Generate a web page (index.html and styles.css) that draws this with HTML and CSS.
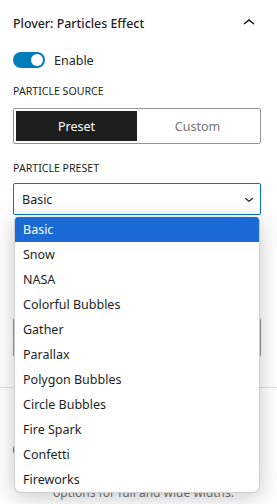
FILE: index.html
```html
<!DOCTYPE html>
<html lang="en">
<head>
  <meta charset="UTF-8">
  <meta name="viewport" content="width=device-width, initial-scale=1.0">
  <title>Plover: Particles Effect</title>
  <link rel="stylesheet" href="styles.css">
</head>
<body>
  <div class="panel">
    <div class="panel-header">
      <span class="panel-title">Plover: Particles Effect</span>
      <svg class="icon-up" width="24" height="24" viewBox="0 0 24 24"><path d="M6.5 12.4L12 8l5.5 4.4-.9 1.2L12 10l-4.6 3.6-1-1.2z"/></svg>
    </div>
    <div class="panel-body">
      <div class="toggle-row">
        <span class="toggle on"><span class="knob"></span></span>
        <span class="toggle-label">Enable</span>
      </div>

      <div class="field-label">Particle Source</div>
      <div class="segmented">
        <span class="seg active">Preset</span>
        <span class="seg">Custom</span>
      </div>

      <div class="field-label second">Particle Preset</div>
      <div class="select-box">
        <span>Basic</span>
        <svg width="18" height="18" viewBox="0 0 24 24"><path d="M17.5 11.6L12 16l-5.5-4.4.9-1.2L12 14l4.6-3.6 1 1.2z"/></svg>
      </div>
      <div class="hidden-box"></div>
    </div>

    <div class="panel next">
      <div class="toggle-row lower">
        <span class="toggle on"><span class="knob"></span></span>
      </div>
      <p class="help">options for full and wide widths.</p>
    </div>

    <ul class="dropdown">
      <li class="selected">Basic</li>
      <li>Snow</li>
      <li>NASA</li>
      <li>Colorful Bubbles</li>
      <li>Gather</li>
      <li>Parallax</li>
      <li>Polygon Bubbles</li>
      <li>Circle Bubbles</li>
      <li>Fire Spark</li>
      <li>Confetti</li>
      <li>Fireworks</li>
    </ul>
  </div>
</body>
</html>
```

FILE: styles.css
```css
body {
  margin: 0;
  padding: 0;
  background: #fff;
  overflow: hidden;
  font-family: "Noto Sans", "Open Sans", sans-serif;
  color: #1e1e1e;
}
.panel {
  position: relative;
  height: 504px;
}
.panel-header {
  display: flex;
  align-items: center;
  justify-content: space-between;
  padding: 11px 16px 11px 13px;
  height: 24px;
}
.panel-title {
  font-size: 12.4px;
  font-weight: 500;
}
.icon-up {
  fill: #1e1e1e;
}
.panel-body {
  padding: 0 16px 0 13px;
}
.toggle-row {
  display: flex;
  align-items: center;
  gap: 9px;
  margin-top: 6px;
  height: 16px;
}
.toggle {
  position: relative;
  width: 32px;
  height: 16px;
  border-radius: 8px;
  background: #007cba;
  flex-shrink: 0;
}
.toggle .knob {
  position: absolute;
  top: 2px;
  right: 2px;
  width: 12px;
  height: 12px;
  border-radius: 50%;
  background: #fff;
}
.toggle-label {
  font-size: 12.5px;
}
.field-label {
  margin-top: 17px;
  font-size: 10.6px;
  line-height: 12px;
  text-transform: uppercase;
  font-weight: 400;
}
.field-label.second {
  margin-top: 18px;
}
.segmented {
  display: flex;
  margin-top: 11px;
  height: 36px;
  box-sizing: border-box;
  border: 1px solid #949494;
  border-radius: 2px;
  padding: 2px;
}
.seg {
  flex: 1;
  display: flex;
  align-items: center;
  justify-content: center;
  font-size: 12.5px;
  color: #757575;
}
.seg.active {
  background: #1e1e1e;
  color: #fff;
}
.select-box {
  display: flex;
  align-items: center;
  justify-content: space-between;
  margin-top: 9px;
  height: 32px;
  box-sizing: border-box;
  border: 1px solid #007cba;
  border-radius: 2px;
  padding: 0 2px 0 8px;
  font-size: 12.5px;
}
.select-box svg {
  fill: #1e1e1e;
}
.hidden-box {
  margin-top: 103px;
  height: 37px;
  border: 1px solid #949494;
  border-radius: 2px;
}
.panel.next {
  position: static;
  height: auto;
  margin-top: 30px;
  border-top: 1px solid #e0e0e0;
  padding: 0 16px 0 13px;
}
.toggle-row.lower {
  margin-top: 54px;
}
.help {
  margin: 27px 0 0 40px;
  font-size: 12px;
  line-height: 16px;
  color: #757575;
}
.dropdown {
  position: absolute;
  top: 217px;
  left: 14px;
  width: 246px;
  margin: 0;
  padding: 0;
  list-style: none;
  background: #fff;
  border: 1px solid #cfcfcf;
  border-top: none;
  box-sizing: border-box;
  border-radius: 4px 4px 7px 7px;
  box-shadow: 0 4px 22px rgba(0, 0, 0, 0.22);
  overflow: hidden;
}
.dropdown li {
  height: 25px;
  line-height: 25px;
  padding-left: 8px;
  font-size: 12.5px;
}
.dropdown li.selected {
  background: #1b6ad5;
  color: #fff;
}
```
